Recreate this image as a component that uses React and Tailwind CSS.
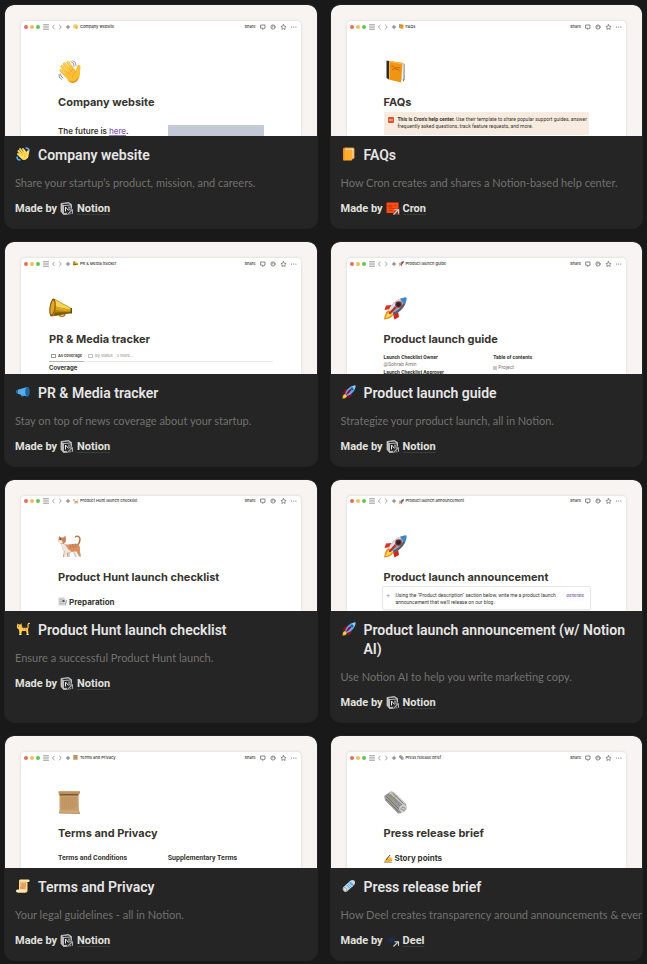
import React from "react";

/* ---------- Large page icons ---------- */

function Wave({ className }) {
  return (
    <svg viewBox="0 0 46 46" className={className} aria-hidden="true">
      <g fill="none" stroke="#77787c" strokeWidth="1.6" strokeLinecap="round">
        <path d="M26 3l5 4 1 6M30 1l5 5 1 5M2 29l1 6 5 4M5 28l1 4 4 4" />
      </g>
      <g stroke="#f3b229" strokeWidth="6" strokeLinecap="round" fill="none">
        <path d="M8 13l13 15M13 8l14 17M20 5l12 17M6 21l12 12" />
      </g>
      <g stroke="#ffd054" strokeWidth="4" strokeLinecap="round" fill="none">
        <path d="M8 12l13 15M13 7l14 17M20 4l12 17M6 20l12 12" />
      </g>
      <path
        d="M12 28L30 17l6 5c1-5 1-9 3-11 2-3 6-1 6 3 0 3-1 7-1 12 0 11-5 18-13 19-7 1-12-4-19-17z"
        fill="#fbbf35"
      />
      <path d="M19 40c8 6 20 2 23-9-1 9-5 14-12 15-5 0-8-2-11-6z" fill="#e3951e" />
      <path d="M15 21l8 8M20 15l8 9M26 12l6 9M29 35c0-6 3-10 8-12" stroke="#e0951f" strokeWidth="1.2" fill="none" />
    </svg>
  );
}

function Book({ className }) {
  return (
    <svg viewBox="0 0 46 46" className={className} aria-hidden="true">
      <path d="M9 2l28 3 4 3v30l-4 3-22-3z" fill="#d9d9d6" />
      <path d="M39 7l2 1v31l-3 5z" fill="#77746f" />
      <path d="M36 7l3 1v30l-3 2z" fill="#f2f2ef" />
      <path d="M5 1l5 1v37l-5-3z" fill="#2c2a2b" />
      <path d="M10 2l27 4-3 39-24-6z" fill="#f09413" />
      <path d="M10 2l26 4v3L12 5v33l-2 1z" fill="#ffb431" />
      <path d="M15 13c4-2 5 3 8 3s5-2 9 0M16 19c5 0 5-4 8-1s5 0 7 3" stroke="#bd5e12" strokeWidth="1.7" fill="none" />
    </svg>
  );
}

function Megaphone({ className }) {
  return (
    <svg viewBox="0 0 46 46" className={className} aria-hidden="true">
      <path d="M20 33c0 7 11 8 12 1" fill="none" stroke="#a97712" strokeWidth="3" />
      <path d="M10 3l36 20v9L6 39C-1 33 0 9 10 3z" fill="#b8860f" />
      <path d="M11 5l34 19v2L13 19z" fill="#f3d552" />
      <path d="M14 19l31 8v2l-32-3z" fill="#d8a81d" />
      <path d="M12 31l33-1v2L9 38z" fill="#80560b" />
      <ellipse cx="7" cy="21" rx="6" ry="18" transform="rotate(8 7 21)" fill="#8a5a0c" />
      <ellipse cx="7" cy="21" rx="4" ry="14" transform="rotate(8 7 21)" fill="#dda52a" />
      <path d="M43 22h3v11h-3z" fill="#6d4a0c" />
    </svg>
  );
}

function Rocket({ className }) {
  return (
    <svg viewBox="0 0 46 46" className={className} aria-hidden="true">
      <path d="M15 16L4 17 1 26l12-2z" fill="#e22f20" />
      <path d="M28 28l2 12-9 5-3-11z" fill="#d92318" />
      <path d="M10 26C3 29 2 37 0 45c8-1 16-3 18-10z" fill="#f28a1a" />
      <path d="M11 29C6 32 5 37 3 42c6-1 11-3 13-8z" fill="#ffe04a" />
      <path d="M45 1C29 1 15 12 10 25l10 10C33 29 45 17 45 1z" fill="#8fa5b8" />
      <path d="M45 1C30 1 16 12 10 25l4 4C20 17 31 7 45 1z" fill="#d3dfe8" />
      <path d="M45 1c-5 0-9 1-13 3l10 11c2-5 3-9 3-14z" fill="#3c86c8" />
      <path d="M42 15C37 25 29 31 20 35l-3-3c10-4 18-11 22-20z" fill="#4c5d6b" />
      <circle cx="29" cy="15" r="6.5" fill="#b02a25" />
      <circle cx="29" cy="15" r="4.5" fill="#25252c" />
      <path d="M9 32l13-13 3 3-13 13z" fill="#c52a20" />
    </svg>
  );
}

function Cat({ className }) {
  return (
    <svg viewBox="0 0 46 46" className={className} aria-hidden="true">
      <path d="M38 21c4-3 6-7 6-13 0-6-7-7-9-4" fill="none" stroke="#b8673a" strokeWidth="2.6" strokeLinecap="round" />
      <path d="M15 19c8 1 17-4 26 0 4 4 3 10 3 14l2 10h-4l-5-10-11 1c-3 2-4 5-3 10h-4l-2-9-2 9h-5l2-12c-4-5-6-12-5-18z" fill="#d99062" />
      <path d="M7 16l7 3c4 5 5 10 13 14l-9 3-1 8h-5l1-12c-4-3-6-9-6-16z" fill="#ece7e1" />
      <path d="M34 34l4 10h-4l-4-9zM24 34l-1 10h-3v-9z" fill="#d5cdc6" />
      <path d="M2 2l4 3h5l4-4 1 9c0 5-4 8-9 8-5-1-7-5-6-9z" fill="#cb8253" />
      <path d="M1 11l6-1 3 6c-3 2-7 1-9-2z" fill="#f4eee8" />
      <circle cx="5" cy="8" r="1.3" fill="#343a2e" />
      <path d="M24 19l2 8M29 18l2 9M35 17l1 9" stroke="#b86539" strokeWidth="1.3" />
    </svg>
  );
}

function Scroll({ className }) {
  return (
    <svg viewBox="0 0 46 46" className={className} aria-hidden="true">
      <path d="M3 5h38l1 37H3z" fill="#c99f6c" />
      <path d="M3 6h38v3H3z" fill="#7d5a35" />
      <rect x="1" y="0" width="43" height="6" rx="2" fill="#b98c59" />
      <path d="M2 1.500h41" stroke="#dfb985" strokeWidth="1.5" />
      <path d="M2 40l42 1v4L2 44z" fill="#d8ad79" />
      <path d="M2 44l42 1" stroke="#8d673e" strokeWidth="1.3" />
      <path d="M7 14h31M7 18h31M7 22h31M7 26h31M7 30h31M7 34h28" stroke="#a57e51" strokeWidth="1.2" strokeDasharray="3 1" />
    </svg>
  );
}

function Newspaper({ className }) {
  return (
    <svg viewBox="0 0 46 46" className={className} aria-hidden="true">
      <path d="M1 10L13 1l6 1 25 24 1 8-11 10-6 1L2 18z" fill="#8f8f8e" />
      <path d="M13 1l6 1 25 24-9 3L8 4z" fill="#c4c4c2" />
      <path d="M1 10l4-4 28 26-4 12L2 18z" fill="#9c9c9b" />
      <path d="M5 11l25 25M11 6l25 22M4 16l25 25M17 4l22 21" stroke="#626262" strokeWidth="1.5" />
      <ellipse cx="38" cy="35" rx="7" ry="8" transform="rotate(40 38 35)" fill="#d2d2d0" />
      <path d="M34 38c-1-6 7-8 8-3s-6 6-5 1" fill="none" stroke="#70706f" strokeWidth="1.5" />
      <path d="M11 26c2-7 6-12 14-16" stroke="#b6933f" strokeWidth="2" fill="none" />
    </svg>
  );
}

/* ---------- Flat title icons ---------- */

function FlatWave() {
  return (
    <svg viewBox="0 0 28 28" className="size-3.5" aria-hidden="true">
      <path d="M20 2c3 0 6 2 6 6M2 20c0 3 2 6 6 6" fill="none" stroke="#55acee" strokeWidth="3" strokeLinecap="round" />
      <g stroke="#ffdc5d" strokeWidth="4" strokeLinecap="round">
        <path d="M5 8l8 9M8 4l8 10M14 4l6 8M4 14l6 6" />
      </g>
      <path d="M6 15l12-8 3 4c0-4 4-6 5-3 1 4-1 7-1 11-2 7-10 9-14 5z" fill="#ffdc5d" />
      <path d="M9 10l5 6M12 7l5 6M17 20c0-4 2-6 4-7" stroke="#ef9645" strokeWidth="1.2" fill="none" />
    </svg>
  );
}

function FlatBook() {
  return (
    <svg viewBox="0 0 28 28" className="size-3.5" aria-hidden="true">
      <path d="M5 1h17a3 3 0 013 3v17a3 3 0 01-3 3H5z" fill="#f4900c" />
      <path d="M5 3h18v19H5z" fill="#e1e8ed" />
      <path d="M5 5h13a3 3 0 013 3v16a3 3 0 01-3 3H5a3 3 0 01-3-3V5z" fill="#ffac33" />
      <path d="M5 1v26a3 3 0 01-3-3V4a3 3 0 013-3z" fill="#f4900c" />
    </svg>
  );
}

function FlatMegaphone() {
  return (
    <svg viewBox="0 0 28 28" className="size-3.5" aria-hidden="true">
      <path d="M8 15h7l1 6c0 2-4 3-6 1z" fill="#3b88c3" />
      <path d="M2 10L22 4v19L2 17c-2-2-2-5 0-7z" fill="#55acee" />
      <ellipse cx="23" cy="13.500" rx="4.500" ry="9.500" fill="#226699" />
      <path d="M1 11v5l3 2V9z" fill="#269" />
    </svg>
  );
}

function FlatRocket() {
  return (
    <svg viewBox="0 0 28 28" className="size-3.5" aria-hidden="true">
      <path d="M2 17c0-5 4-9 11-9l7 7c0 7-4 11-9 11 1-3 1-5 0-6l-3-3c-2-1-4-1-6 0z" fill="#a0041e" />
      <path d="M27 1C17 1 9 8 6 18l4 4C20 19 27 11 27 1z" fill="#55acee" />
      <path d="M27 1c-3 0-6 1-8 2l6 6c1-2 2-5 2-8z" fill="#8ccaf7" />
      <path d="M8 20c2-7 6-11 12-13-2 6-6 10-12 13z" fill="#a0041e" />
      <path d="M1 27c0-5 1-8 5-9l4 4c-1 4-4 5-9 5z" fill="#ffac33" />
      <circle cx="6" cy="22" r="2.500" fill="#ffcc4d" />
      <circle cx="20" cy="8" r="2.800" fill="#226699" />
    </svg>
  );
}

function FlatCat() {
  return (
    <svg viewBox="0 0 28 28" className="size-3.5" aria-hidden="true">
      <path d="M23 13c2-1 1-4 1-7 0-2 1-4 3-3" fill="none" stroke="#ffcc4d" strokeWidth="2.400" strokeLinecap="round" />
      <path d="M3 3l3 2h3l2-3 1 9c4 1 8 0 12 1l1 14h-3l-2-8h-8l-2 8H7L6 15C2 13 1 10 2 7z" fill="#ffcc4d" />
      <path d="M15 12l1 4M19 12v4M23 16l-3 1M10 9l3 1" stroke="#f18f26" strokeWidth="1.700" />
      <circle cx="5" cy="8" r="1" fill="#292f33" />
      <path d="M7 25h4M21 25h4" stroke="#fff1cc" strokeWidth="2" />
    </svg>
  );
}

function FlatScroll() {
  return (
    <svg viewBox="0 0 28 28" className="size-3.5" aria-hidden="true">
      <path d="M6 3h18c-2 2-1 4-1 6v14c0 2-1 4-3 4H3c2-1 3-3 3-5z" fill="#ffd983" />
      <path d="M8 1h17c3 0 3 5 0 5H9C6 6 6 1 8 1z" fill="#ffe8b6" />
      <path d="M3 21h15c-1 2 0 6 2 6H3c-4 0-4-6 0-6z" fill="#ffe8b6" />
      <path d="M9 10h11M9 14h11M8 18h11" stroke="#c1694f" strokeWidth="2" />
      <path d="M7 6h15" stroke="#e39f3d" strokeWidth="1.300" />
    </svg>
  );
}

function FlatNewspaper() {
  return (
    <svg viewBox="0 0 28 28" className="size-3.5" aria-hidden="true">
      <path d="M2 17L17 3c5-3 10 0 9 5 0 2-1 3-2 4L10 25c-5 3-10-3-8-8z" fill="#ccd6dd" />
      <path d="M9 13l8-8 6 6-8 8z" fill="#55acee" />
      <path d="M10 10l8 8M13 8l8 8" stroke="#e1e8ed" strokeWidth="2" />
      <ellipse cx="6" cy="21" rx="4" ry="5" transform="rotate(-40 6 21)" fill="#99aab5" />
      <ellipse cx="6" cy="21" rx="2" ry="3" transform="rotate(-40 6 21)" fill="#e1e8ed" />
    </svg>
  );
}

/* ---------- Maker logos ---------- */

function ExternalArrow({ color }) {
  return <path d="M15 25L24 16M17 15.500h8v8" fill="none" stroke={color} strokeWidth="2.200" />;
}

function NotionLogo() {
  return (
    <svg viewBox="0 0 28 28" className="size-3.5" aria-hidden="true">
      <path d="M2 3l15-2 6 4v17l-2 2-14 1-5-6z" fill="#b9b9b9" />
      <path d="M8 8l13-1v14l-13 1z" fill="#252525" />
      <path d="M4 4l13-1 3 2-12 1z" fill="#252525" />
      <path d="M2 3l15-2 6 4v17l-2 2-14 1-5-6z" fill="none" stroke="#d0d0d0" strokeWidth="1.500" />
      <path d="M11 19v-9l7 8v-9" fill="none" stroke="#e6e6e6" strokeWidth="2" />
      <path d="M15 25L24 16M17 16h8v7" fill="none" stroke="#252525" strokeWidth="5" />
      <ExternalArrow color="#a9a9a9" />
    </svg>
  );
}

function CronLogo() {
  return (
    <svg viewBox="0 0 28 28" className="size-3.5" aria-hidden="true">
      <rect x="1" y="1" width="24" height="21" fill="#ff4a12" />
      <path d="M5 7h7v3H5zM14 7h7M5 13h14M5 17h8" stroke="#d63a0c" strokeWidth="2" fill="#d63a0c" />
      <path d="M13 26l7-12 8-1v13z" fill="#6d3a2b" />
      <ExternalArrow color="#d9d0cc" />
    </svg>
  );
}

function DeelLogo() {
  return (
    <svg viewBox="0 0 28 28" className="size-3.5" aria-hidden="true">
      <circle cx="8" cy="13" r="3.300" fill="none" stroke="#15357a" strokeWidth="2" />
      <path d="M12 6v11M16 6v8" stroke="#15357a" strokeWidth="2" />
      <ExternalArrow color="#d0d0d0" />
    </svg>
  );
}

const makers = { Notion: NotionLogo, Cron: CronLogo, Deel: DeelLogo };

/* ---------- Preview window ---------- */

const line = { fill: "none", stroke: "#6b6964", strokeLinecap: "round", strokeLinejoin: "round" };

function Toolbar({ title, Icon }) {
  return (
    <div className="flex h-[11px] items-center justify-between pr-[2px] pl-[3px]">
      <div className="flex items-center">
        <div className="flex gap-[2px]">
          <span className="size-1 rounded-full bg-[#ed6a5e]" />
          <span className="size-1 rounded-full bg-[#f4be4f]" />
          <span className="size-1 rounded-full bg-[#61c554]" />
        </div>
        <svg viewBox="0 0 28 8" className="ml-[3px] h-2 w-7" aria-hidden="true">
          <path d="M0.500 1.800h5M0.500 4h5M0.500 6.200h5" {...line} strokeWidth="0.700" />
          <path d="M11.200 2L9.500 4l1.700 2M16.500 2l1.700 2-1.700 2" {...line} strokeWidth="0.600" />
          <path d="M23.300 4h3.400M25 2.300v3.400" {...line} strokeWidth="0.900" />
        </svg>
        <Icon className="ml-[2px] size-[5px]" />
        <span className="ml-[2px] text-[4px] leading-none font-medium whitespace-nowrap text-[#37352f]">{title}</span>
      </div>
      <div className="flex items-center">
        <button type="button" className="text-[4px] leading-none font-medium text-[#37352f]">Share</button>
        <svg viewBox="0 0 40 8" className="ml-[3px] h-2 w-10" aria-hidden="true">
          <path d="M2 2h4v3.200H5L3.800 6.500V5.200H2z" {...line} strokeWidth="0.800" />
          <circle cx="14" cy="4" r="2.100" {...line} strokeWidth="0.800" />
          <path d="M14 2.800V4h-1" {...line} strokeWidth="0.600" />
          <path d="M24.500 1.600l0.800 1.600 1.800 0.300-1.300 1.200 0.300 1.800-1.600-0.900-1.600 0.900 0.300-1.800-1.300-1.200 1.800-0.300z" {...line} strokeWidth="0.700" />
          <path d="M32.500 4h.01M34.700 4h.01M36.900 4h.01" {...line} strokeWidth="1.200" />
        </svg>
      </div>
    </div>
  );
}

function Preview({ title, Icon, wide, children }) {
  return (
    <div className="aspect-[237/100] overflow-hidden rounded-t-lg bg-[#f8f4f1] px-4 pt-4 font-['Inter',sans-serif] text-[#37352f]">
      <div className="h-full overflow-hidden rounded-t-sm bg-white shadow-[0_0_3px_rgba(0,0,0,0.15)]">
        <Toolbar title={title} Icon={Icon} />
        <div className={wide ? "px-7 pt-7" : "px-[37px] pt-7"}>
          <Icon className="size-[23px]" />
          <p className="mt-[11px] text-[11px] leading-4 font-bold whitespace-nowrap">{title}</p>
          {children}
        </div>
      </div>
    </div>
  );
}

function WebsiteBody() {
  return (
    <div className="mt-[15px] grid grid-cols-2 gap-3.5">
      <p className="text-[8px] leading-3 font-semibold whitespace-nowrap">
        The future is <span className="font-medium text-[#8460b5] underline decoration-[#9a7fc0] underline-offset-1">here</span>.
      </p>
      <div className="h-5 bg-[#c4c9d7]" />
    </div>
  );
}

function FaqBody() {
  return (
    <div className="mt-[2px] flex h-[23px] gap-1 bg-[#f8ece0] px-1 pt-1">
      <svg viewBox="0 0 12 12" className="mt-px size-1.5 shrink-0" aria-hidden="true">
        <rect width="12" height="12" rx="2" fill="#e5532d" />
        <path d="M2 6h8" stroke="#fbe3d6" strokeWidth="2" />
      </svg>
      <p className="font-['Roboto',sans-serif] text-[5px] leading-[7px] whitespace-nowrap">
        <b className="font-bold">This is Cron's help center.</b> Use their template to share popular support guides, answer
        <br />
        frequently asked questions, track feature requests, and more.
      </p>
    </div>
  );
}

function TrackerBody() {
  return (
    <>
      <div className="mt-1 flex h-[11px] items-center border-b border-[#ecebe9] text-[4px] leading-none text-[#8b8984]">
        <div className="flex h-[11px] items-center gap-[2px] border-b border-[#b5b3af] px-[2px] font-semibold text-[#37352f]">
          <span className="h-1 w-[5px] border border-[#9c9a96]" />
          All coverage
        </div>
        <div className="ml-1 flex items-center gap-[2px]">
          <span className="h-1 w-[5px] border border-[#c5c3bf]" />
          By status
        </div>
        <span className="ml-1">3 more...</span>
      </div>
      <p className="mt-[2px] text-[6px] leading-2 font-bold">Coverage</p>
    </>
  );
}

function GuideBody() {
  return (
    <div className="mt-[7px] grid grid-cols-2 gap-3.5 font-['Roboto',sans-serif] text-[5px] leading-[7px] whitespace-nowrap">
      <div>
        <p className="font-bold">Launch Checklist Owner</p>
        <p className="text-[#77756f]">@Sohrab Amin</p>
        <p className="mt-px font-bold">Launch Checklist Approver</p>
      </div>
      <div>
        <p className="font-bold">Table of contents</p>
        <p className="mt-[3px] flex items-center gap-px text-[#77756f]">
          <span className="size-1 bg-[#c9c7c3]" />
          Project
        </p>
      </div>
    </div>
  );
}

function ChecklistBody() {
  return (
    <div className="mt-[11px] flex items-center gap-[2px]">
      <svg viewBox="0 0 18 18" className="size-[9px]" aria-hidden="true">
        <path d="M1 1h11l3 4v12H1z" fill="#cfd1d3" />
        <path d="M3 5h6M3 9h8M3 13h8" stroke="#b5b8bb" strokeWidth="1.500" />
        <path d="M9 6h4v4H9z" fill="#565a60" />
        <path d="M17 6l-2 10" stroke="#4b8fd1" strokeWidth="1.500" />
      </svg>
      <span className="text-[8px] leading-3 font-bold">Preparation</span>
    </div>
  );
}

function AnnouncementBody() {
  return (
    <div className="-mx-[2px] mt-px flex h-6 rounded-xs border border-[#e8e6f3] px-[3px] pt-[5px] shadow-xs">
      <svg viewBox="0 0 12 12" className="mt-px size-[5px] shrink-0" aria-hidden="true">
        <path d="M5 0l1 5 5 2-5 1-1 4-1-4-4-2 4-1z" fill="#b9a2dd" />
      </svg>
      <p className="ml-[5px] font-['Roboto',sans-serif] text-[5px] leading-[7px] whitespace-nowrap">
        Using the "Product description" section below, write me a product launch
        <br />
        announcement that we'll release on our blog.
      </p>
      <button type="button" className="ml-auto h-2 rounded-xs px-[3px] text-[4px] leading-none font-semibold text-[#8460b5] shadow-[0_0_1px_rgba(0,0,0,0.15)]">
        Generate
      </button>
    </div>
  );
}

function TermsBody() {
  return (
    <div className="mt-[11px] grid grid-cols-2 gap-3.5 font-['Roboto',sans-serif] text-[7px] leading-3 font-bold whitespace-nowrap">
      <p>Terms and Conditions</p>
      <p>Supplementary Terms</p>
    </div>
  );
}

function PressBody() {
  return (
    <div className="mt-[11px] flex items-center gap-[2px]">
      <svg viewBox="0 0 18 18" className="size-[9px]" aria-hidden="true">
        <path d="M1 13l6-6 5-1 5 3-1 5-6 2H1z" fill="#fbbf35" />
        <path d="M7 11l4 2h5" stroke="#d98f1c" strokeWidth="1.500" fill="none" />
        <path d="M4 12L12 2" stroke="#4a4a4a" strokeWidth="2" />
        <path d="M0 16.500h16" stroke="#333" strokeWidth="1" />
      </svg>
      <span className="text-[8px] leading-3 font-bold">Story points</span>
    </div>
  );
}

/* ---------- Gallery ---------- */

const templates = [
  { title: "Company website", text: "Share your startup’s product, mission, and careers.", maker: "Notion", Icon: Wave, Flat: FlatWave, Body: WebsiteBody },
  { title: "FAQs", text: "How Cron creates and shares a Notion-based help center.", maker: "Cron", Icon: Book, Flat: FlatBook, Body: FaqBody },
  { title: "PR & Media tracker", text: "Stay on top of news coverage about your startup.", maker: "Notion", Icon: Megaphone, Flat: FlatMegaphone, Body: TrackerBody, wide: true },
  { title: "Product launch guide", text: "Strategize your product launch, all in Notion.", maker: "Notion", Icon: Rocket, Flat: FlatRocket, Body: GuideBody },
  { title: "Product Hunt launch checklist", text: "Ensure a successful Product Hunt launch.", maker: "Notion", Icon: Cat, Flat: FlatCat, Body: ChecklistBody },
  { title: "Product launch announcement (w/ Notion AI)", preview: "Product launch announcement", text: "Use Notion AI to help you write marketing copy.", maker: "Notion", Icon: Rocket, Flat: FlatRocket, Body: AnnouncementBody },
  { title: "Terms and Privacy", text: "Your legal guidelines - all in Notion.", maker: "Notion", Icon: Scroll, Flat: FlatScroll, Body: TermsBody },
  { title: "Press release brief", text: "How Deel creates transparency around announcements & events.", maker: "Deel", Icon: Newspaper, Flat: FlatNewspaper, Body: PressBody },
];

function Card({ title, preview, text, maker, Icon, Flat, Body, wide }) {
  const Logo = makers[maker];
  return (
    <article className="min-w-0 overflow-hidden rounded-[10px] border border-[#232323] bg-[#252525]">
      <Preview title={preview || title} Icon={Icon} wide={wide}>
        <Body />
      </Preview>
      <div className="pt-2.5 pb-[11px] pl-2.5">
        <h2 className="flex gap-2 pr-3 pl-px text-[14px] leading-[19px] font-semibold text-[#e6e6e5]">
          <span className="mt-px shrink-0">
            <Flat />
          </span>
          {title}
        </h2>
        <p className="mt-2.5 overflow-hidden font-['Lato',sans-serif] text-[11px] leading-4 whitespace-nowrap text-[#72716e]">{text}</p>
        <p className="mt-2.5 flex items-center text-[11px] leading-4 font-bold text-[#e0e0df]">
          Made by
          <a href="#" className="ml-[3px] flex items-center gap-[3px] underline decoration-[#3c3c3c] underline-offset-2">
            <Logo />
            {maker}
          </a>
        </p>
      </div>
    </article>
  );
}

export default function App() {
  return (
    <main className="min-h-screen bg-[#191919] font-['Roboto',sans-serif]">
      <div className="grid grid-cols-2 gap-3 px-1 pt-1 pb-0.5">
        {templates.map((t) => (
          <Card key={t.title} {...t} />
        ))}
      </div>
    </main>
  );
}
